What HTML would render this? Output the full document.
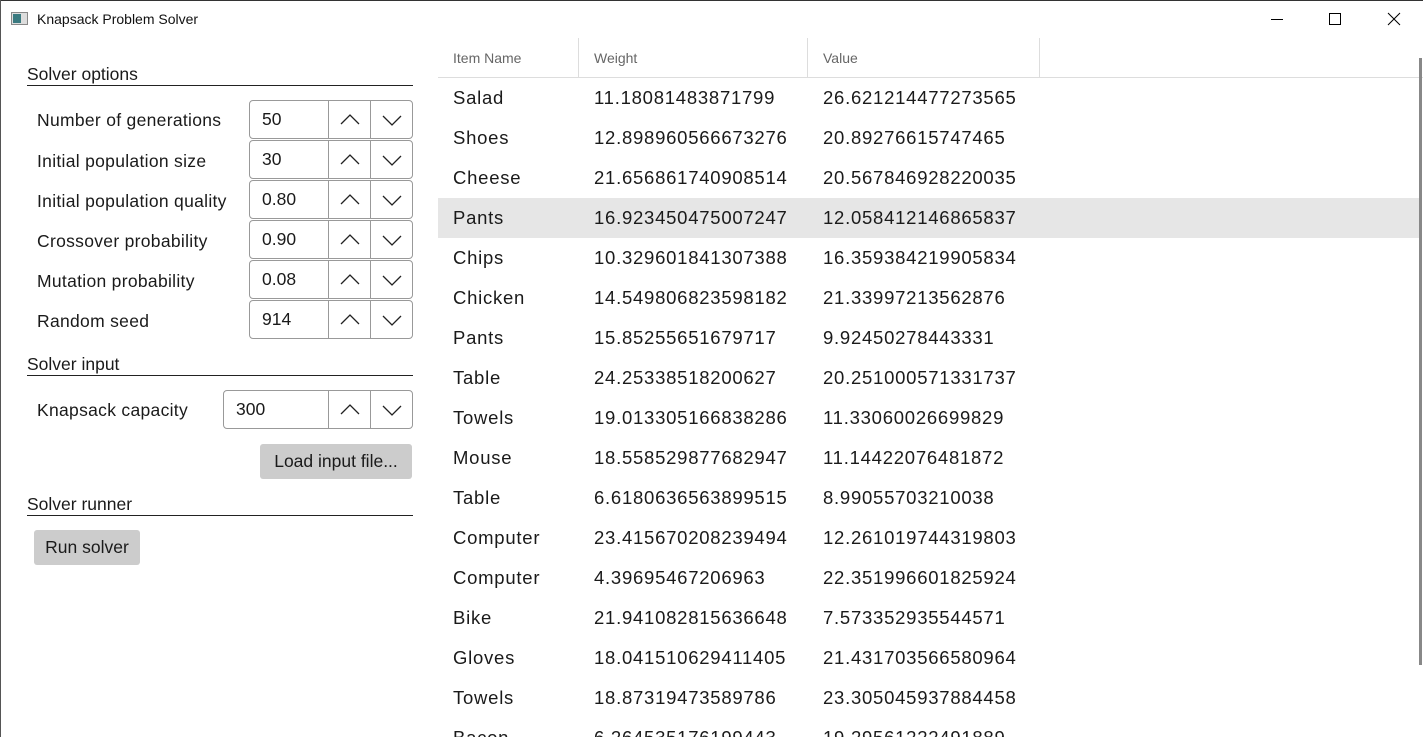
<!DOCTYPE html>
<html><head><style>
html,body{margin:0;width:1423px;height:737px;overflow:hidden}
body{background:#fff;font-family:"Liberation Sans",sans-serif;color:#1a1a1a;position:relative}
.a{position:absolute;white-space:nowrap}
.tb{position:absolute;left:0;top:0;width:1423px;height:1px;background:#333}
.lb{position:absolute;left:0;top:0;width:1px;height:737px;background:#555}
.sec{position:absolute;left:27px;width:386px;height:1px;background:#222}
.st{font-size:17.5px}
.lab{font-size:17.5px;left:37px;letter-spacing:.3px}
.spin{position:absolute;border:1px solid #999;border-radius:4px;height:37px;background:#fff}
.spin .v{position:absolute;left:12px;top:8px;font-size:17.5px}
.spin .s1,.spin .s2{position:absolute;top:0;width:1px;height:37px;background:#999}
.btn{position:absolute;background:#ccc;border-radius:3px;font-size:17.5px;text-align:center}
.hd{font-size:14px;color:#666;top:50px}
.cs{position:absolute;top:38px;width:1px;height:40px;background:#ddd}
.row{position:absolute;left:438px;width:982px;height:40px;font-size:18.5px;letter-spacing:.75px}
.row span{position:absolute;top:9px}
</style></head><body>
<div class="tb"></div><div class="lb"></div>
<svg class="a" style="left:11px;top:12px" width="18" height="14"><rect x="0.5" y="0.5" width="16" height="12" fill="#ddd" stroke="#888"/><rect x="2" y="2" width="8" height="9" fill="#3a7a80"/></svg>
<div class="a" style="left:37px;top:11px;font-size:14px;color:#111">Knapsack Problem Solver</div>
<svg class="a" style="left:1266px;top:12px" width="150" height="16"><line x1="5" y1="7.5" x2="17" y2="7.5" stroke="#000"/><rect x="63.5" y="1.5" width="11" height="11" fill="none" stroke="#000"/><path d="M122 1L134 13M134 1L122 13" stroke="#000"/></svg>

<div class="a st" style="left:27px;top:64px">Solver options</div><div class="sec" style="top:85px"></div>
<div class="a st" style="left:27px;top:354px">Solver input</div><div class="sec" style="top:375px"></div>
<div class="a st" style="left:27px;top:494px">Solver runner</div><div class="sec" style="top:515px"></div>

<div class="a lab" style="top:110px">Number of generations</div>
<div class="a lab" style="top:151px">Initial population size</div>
<div class="a lab" style="top:191px">Initial population quality</div>
<div class="a lab" style="top:231px">Crossover probability</div>
<div class="a lab" style="top:271px">Mutation probability</div>
<div class="a lab" style="top:311px">Random seed</div>
<div class="a lab" style="top:400px">Knapsack capacity</div>

<div id="spins"></div>
<div class="btn" style="left:260px;top:444px;width:152px;height:35px;line-height:35px">Load input file...</div>
<div class="btn" style="left:34px;top:530px;width:106px;height:35px;line-height:35px">Run solver</div>

<div class="a hd" style="left:453px">Item Name</div>
<div class="a hd" style="left:594px">Weight</div>
<div class="a hd" style="left:823px">Value</div>
<div class="cs" style="left:578px"></div><div class="cs" style="left:807px"></div><div class="cs" style="left:1039px"></div>
<div class="a" style="left:438px;top:77px;width:985px;height:1px;background:#ddd"></div>
<div id="rows"></div>
<div class="a" style="left:1419px;top:58px;width:3px;height:607px;background:#888"></div>
<script>
var sp=[[249,100,"50"],[249,140,"30"],[249,180,"0.80"],[249,220,"0.90"],[249,260,"0.08"],[249,300,"914"],[223,390,"300"]];
var h="";sp.forEach(function(s){var w=412-s[0];var a=328-s[0],b=370-s[0];
h+='<div class="spin" style="left:'+s[0]+'px;top:'+s[1]+'px;width:'+(w-1)+'px"><div class="v">'+s[2]+'</div><div class="s1" style="left:'+(a-1)+'px"></div><div class="s2" style="left:'+(b-1)+'px"></div>'+
'<svg style="position:absolute;left:'+a+'px;top:0" width="84" height="37"><path d="M12 23L21 14L30 23" fill="none" stroke="#222" stroke-width="1.3"/><path d="M54 15L63 24L72 15" fill="none" stroke="#222" stroke-width="1.3"/></svg></div>';});
document.getElementById("spins").innerHTML=h;
var d=[["Salad","11.18081483871799","26.621214477273565"],["Shoes","12.898960566673276","20.89276615747465"],["Cheese","21.656861740908514","20.567846928220035"],["Pants","16.923450475007247","12.058412146865837"],["Chips","10.329601841307388","16.359384219905834"],["Chicken","14.549806823598182","21.33997213562876"],["Pants","15.85255651679717","9.92450278443331"],["Table","24.25338518200627","20.251000571331737"],["Towels","19.013305166838286","11.33060026699829"],["Mouse","18.558529877682947","11.14422076481872"],["Table","6.6180636563899515","8.99055703210038"],["Computer","23.415670208239494","12.261019744319803"],["Computer","4.39695467206963","22.351996601825924"],["Bike","21.941082815636648","7.573352935544571"],["Gloves","18.041510629411405","21.431703566580964"],["Towels","18.87319473589786","23.305045937884458"],["Bacon","6.264535176199443","19.29561222491889"]];
h="";d.forEach(function(r,i){h+='<div class="row" style="top:'+(78+i*40)+'px;'+(i==3?'background:#e6e6e6':'')+'"><span style="left:15px">'+r[0]+'</span><span style="left:156px">'+r[1]+'</span><span style="left:385px">'+r[2]+'</span></div>';});
document.getElementById("rows").innerHTML=h;
</script>
</body></html>
